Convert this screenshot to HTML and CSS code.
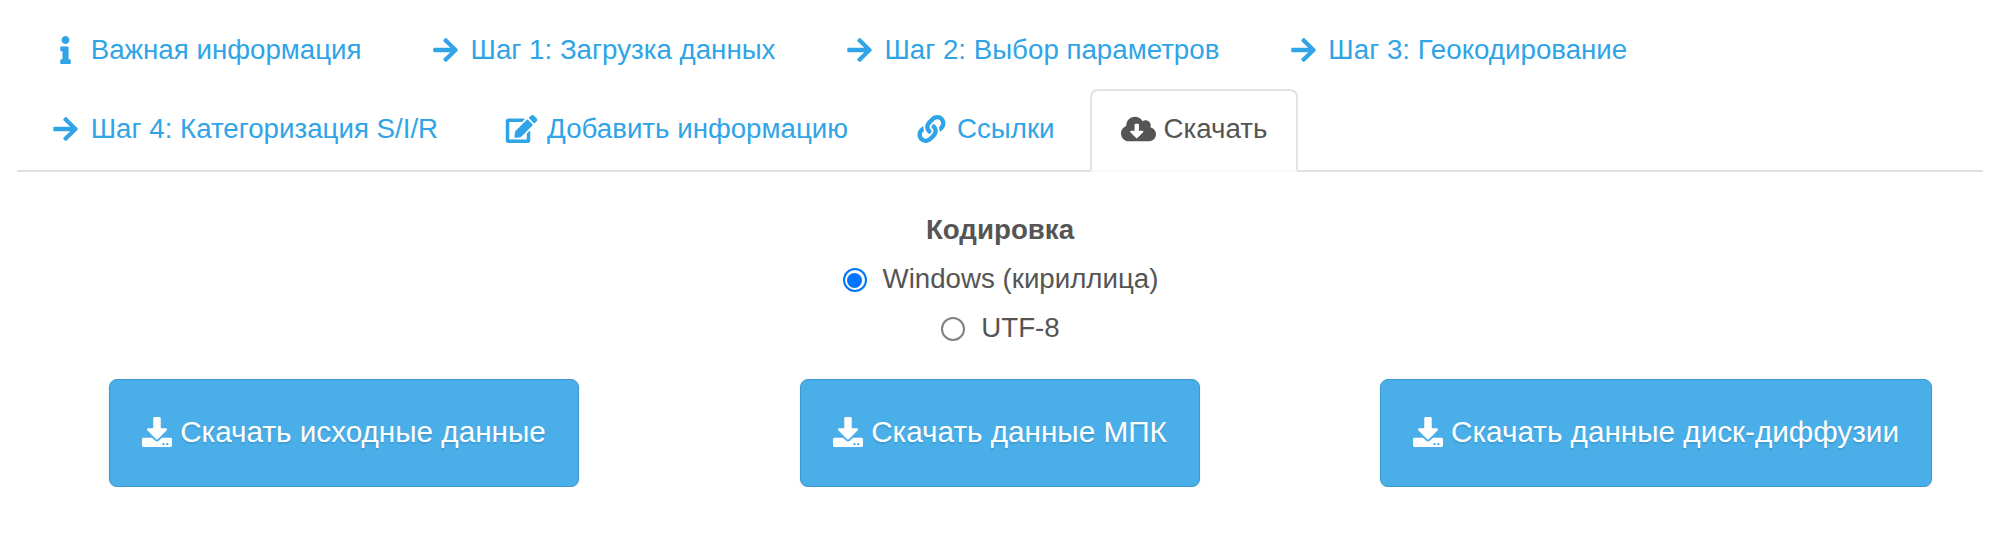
FILE: index.html
```html
<!DOCTYPE html>
<html lang="ru">
<head>
<meta charset="utf-8">
<title>Скачать</title>
<link rel="stylesheet" href="styles.css">
</head>
<body>
<svg class="sprite" aria-hidden="true">
  <symbol id="arrow" viewBox="0 0 448 512"><path d="M190.5 66.9l22.2-22.2c9.4-9.4 24.6-9.4 33.9 0L441 239c9.4 9.4 9.4 24.6 0 33.9L246.6 467.3c-9.4 9.4-24.6 9.4-33.9 0l-22.2-22.2c-9.5-9.5-9.3-25 .4-34.3L311.4 296H24c-13.3 0-24-10.7-24-24v-32c0-13.3 10.7-24 24-24h287.4L190.9 101.2c-9.8-9.3-10-24.8-.4-34.3z"/></symbol>
  <symbol id="info" viewBox="0 0 192 512"><path d="M20 424.229h20V279.771H20c-11.046 0-20-8.954-20-20V212c0-11.046 8.954-20 20-20h112c11.046 0 20 8.954 20 20v212.229h20c11.046 0 20 8.954 20 20V492c0 11.046-8.954 20-20 20H20c-11.046 0-20-8.954-20-20v-47.771c0-11.046 8.954-20 20-20zM96 0C56.235 0 24 32.235 24 72s32.235 72 72 72 72-32.235 72-72S135.764 0 96 0z"/></symbol>
  <symbol id="edit" viewBox="0 0 576 512"><path d="M402.6 83.2l90.2 90.2c3.8 3.8 3.8 10 0 13.8L274.4 405.6l-92.8 10.3c-12.4 1.4-22.9-9.1-21.5-21.5l10.3-92.8L388.8 83.2c3.8-3.8 10-3.8 13.8 0zm162-22.9l-48.8-48.8c-15.2-15.2-39.9-15.2-55.2 0l-35.4 35.4c-3.8 3.8-3.8 10 0 13.8l90.2 90.2c3.8 3.8 10 3.8 13.8 0l35.4-35.4c15.2-15.3 15.2-40 0-55.2zM384 346.2V448H64V128h229.8c3.2 0 6.2-1.3 8.5-3.5l40-40c7.6-7.6 2.2-20.5-8.5-20.5H48C21.5 64 0 85.5 0 112v352c0 26.5 21.5 48 48 48h352c26.5 0 48-21.5 48-48V306.2c0-10.7-12.9-16-20.5-8.5l-40 40c-2.2 2.3-3.5 5.3-3.5 8.5z"/></symbol>
  <symbol id="link" viewBox="0 0 512 512"><path d="M326.612 185.391c59.747 59.809 58.927 155.698.36 214.59-.11.12-.24.25-.36.37l-67.2 67.2c-59.27 59.27-155.699 59.262-214.96 0-59.27-59.26-59.27-155.7 0-214.96l37.106-37.106c9.84-9.84 26.786-3.3 27.294 10.606.648 17.722 3.826 35.527 9.69 52.721 1.986 5.822.567 12.262-3.783 16.612l-13.087 13.087c-28.026 28.026-28.905 73.66-1.155 101.96 28.024 28.579 74.086 28.749 102.325.51l67.2-67.19c28.191-28.191 28.073-73.757 0-101.83-3.701-3.694-7.429-6.564-10.341-8.569a16.037 16.037 0 0 1-6.947-12.606c-.396-10.567 3.348-21.456 11.698-29.806l21.054-21.055c5.521-5.521 14.182-6.199 20.584-1.731a152.482 152.482 0 0 1 20.522 17.197zM467.547 44.449c-59.261-59.262-155.69-59.27-214.96 0l-67.2 67.2c-.12.12-.25.25-.36.37-58.566 58.892-59.387 154.781.36 214.59a152.454 152.454 0 0 0 20.521 17.196c6.402 4.468 15.064 3.789 20.584-1.731l21.054-21.055c8.35-8.35 12.094-19.239 11.698-29.806a16.037 16.037 0 0 0-6.947-12.606c-2.912-2.005-6.64-4.875-10.341-8.569-28.073-28.073-28.191-73.639 0-101.83l67.2-67.19c28.239-28.239 74.3-28.069 102.325.51 27.75 28.3 26.872 73.934-1.155 101.96l-13.087 13.087c-4.35 4.35-5.769 10.79-3.783 16.612 5.864 17.194 9.042 34.999 9.69 52.721.509 13.906 17.454 20.446 27.294 10.606l37.106-37.106c59.271-59.259 59.271-155.699.001-214.959z"/></symbol>
  <symbol id="cloud" viewBox="0 0 640 512"><path d="M537.6 226.6c4.1-10.7 6.4-22.4 6.4-34.6 0-53-43-96-96-96-19.7 0-38.1 6-53.3 16.2C367 64.2 315.3 32 256 32c-88.4 0-160 71.6-160 160 0 2.7.1 5.4.2 8.1C40.2 219.8 0 273.2 0 336c0 79.5 64.5 144 144 144h368c70.7 0 128-57.3 128-128 0-61.9-44-113.6-102.4-125.4zm-132.9 88.7L299.3 420.7c-6.2 6.2-16.4 6.2-22.6 0L171.3 315.3c-10.1-10.1-2.9-27.3 11.3-27.3H248V176c0-8.8 7.2-16 16-16h48c8.8 0 16 7.2 16 16v112h65.4c14.2 0 21.4 17.2 11.3 27.3z"/></symbol>
  <symbol id="download" viewBox="0 0 512 512"><path d="M216 0h80c13.3 0 24 10.7 24 24v168h87.7c17.8 0 26.7 21.5 14.1 34.1L269.7 378.3c-7.5 7.5-19.8 7.5-27.3 0L90.1 226.1c-12.6-12.6-3.7-34.1 14.1-34.1H192V24c0-13.3 10.7-24 24-24zm296 376v112c0 13.3-10.7 24-24 24H24c-13.3 0-24-10.7-24-24V376c0-13.3 10.7-24 24-24h146.7l49 49c20.1 20.1 52.5 20.1 72.6 0l49-49H488c13.3 0 24 10.7 24 24zm-124 88c0-11-9-20-20-20s-20 9-20 20 9 20 20 20 20-9 20-20zm64 0c0-11-9-20-20-20s-20 9-20 20 9 20 20 20 20-9 20-20z"/></symbol>
</svg>
<nav class="tabs">
  <a class="tab"><svg class="icon"><use href="#info"/></svg><span>Важная информация</span></a>
  <a class="tab"><svg class="icon"><use href="#arrow"/></svg><span>Шаг 1: Загрузка данных</span></a>
  <a class="tab"><svg class="icon"><use href="#arrow"/></svg><span>Шаг 2: Выбор параметров</span></a>
  <a class="tab"><svg class="icon"><use href="#arrow"/></svg><span>Шаг 3: Геокодирование</span></a>
  <a class="tab"><svg class="icon"><use href="#arrow"/></svg><span>Шаг 4: Категоризация S/I/R</span></a>
  <a class="tab"><svg class="icon"><use href="#edit"/></svg><span>Добавить информацию</span></a>
  <a class="tab"><svg class="icon"><use href="#link"/></svg><span>Ссылки</span></a>
  <a class="tab active"><svg class="icon"><use href="#cloud"/></svg><span>Скачать</span></a>
</nav>
<main>
  <div class="encoding">
    <div class="label">Кодировка</div>
    <label class="option"><input class="radio" type="radio" name="encoding" checked><span>Windows (кириллица)</span></label>
    <label class="option"><input class="radio" type="radio" name="encoding"><span>UTF-8</span></label>
  </div>
  <div class="downloads">
    <button class="btn"><svg class="btn-icon"><use href="#download"/></svg><span>Скачать исходные данные</span></button>
    <button class="btn"><svg class="btn-icon"><use href="#download"/></svg><span>Скачать данные МПК</span></button>
    <button class="btn"><svg class="btn-icon"><use href="#download"/></svg><span>Скачать данные диск-диффузии</span></button>
  </div>
</main>
</body>
</html>
```
FILE: styles.css
```css
* { box-sizing: border-box; }
body {
  margin: 0;
  padding: 10px 17px 0;
  background: #fff;
  color: #555;
  font: 27.7px/40px "Liberation Sans", Arial, sans-serif;
}
.sprite { display: none; }
.tabs {
  display: flex;
  flex-wrap: wrap;
  padding-bottom: 2px;
  border-bottom: 2px solid #e0e0e0;
}
.tab {
  display: flex;
  align-items: center;
  gap: 7.7px;
  height: 83px;
  margin: 0 4.3px -4px 0;
  padding: 0 29px 4px;
  border: 2px solid transparent;
  border-radius: 8px 8px 0 0;
  color: #2fa4e7;
  white-space: nowrap;
}
.tab.active {
  border-color: #e2e2e2;
  border-bottom-color: #f9f9f9;
  background: #fff;
  color: #555;
}
.icon {
  width: 35px;
  height: 28px;
  fill: currentColor;
}
.encoding {
  display: flex;
  flex-direction: column;
  align-items: center;
  padding-top: 38px;
}
.label { font-weight: bold; }
.option {
  display: flex;
  align-items: center;
  gap: 16px;
  margin-top: 9px;
}
.radio {
  appearance: none;
  display: grid;
  place-content: center;
  width: 24px;
  height: 24px;
  margin: 2px 0 0 1px;
  border: 2px solid #808080;
  border-radius: 50%;
}
.radio:checked { border-color: #0075ff; }
.radio:checked::before {
  content: "";
  width: 15px;
  height: 15px;
  border-radius: 50%;
  background: #0075ff;
}
.downloads {
  display: grid;
  grid-template-columns: repeat(3, 656px);
  justify-content: center;
  justify-items: center;
  margin-top: 31px;
}
.btn {
  display: flex;
  align-items: center;
  gap: 8px;
  height: 108px;
  padding: 0 32px 2px;
  border: 1px solid #3d98cf;
  border-radius: 8px;
  background: #4aaee9;
  box-shadow: 0 1px 2px rgba(0, 0, 0, 0.12);
  color: #fff;
  font: 29.7px/40px "Liberation Sans", Arial, sans-serif;
  text-shadow: 0 2px 1px rgba(0, 0, 0, 0.1);
  white-space: nowrap;
}
.btn-icon {
  width: 30px;
  height: 30px;
  margin-bottom: 1px;
  fill: currentColor;
}
```
